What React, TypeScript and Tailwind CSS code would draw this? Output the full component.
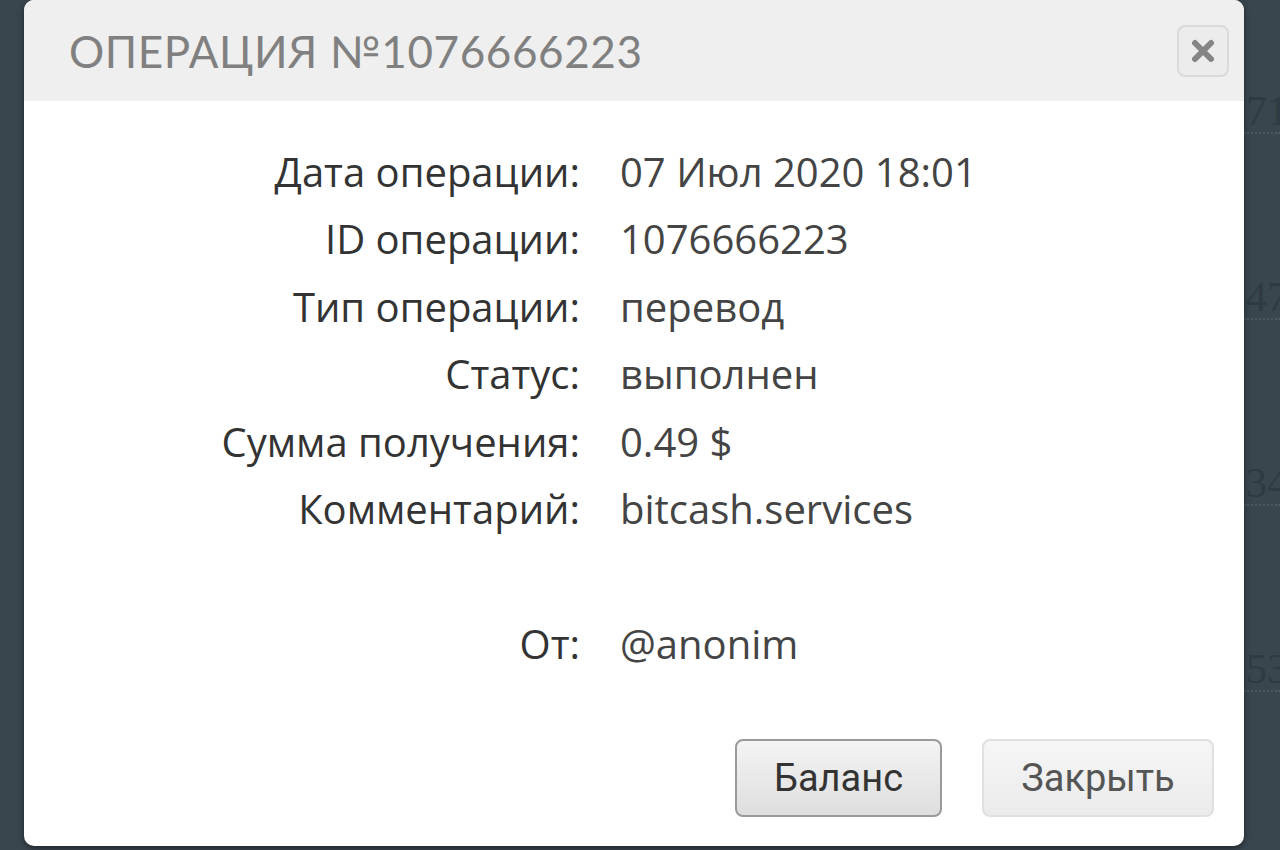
import React from 'react';

const rows = [
  { label: 'Дата операции:', value: '07 Июл 2020 18:01' },
  { label: 'ID операции:', value: '1076666223' },
  { label: 'Тип операции:', value: 'перевод' },
  { label: 'Статус:', value: 'выполнен' },
  { label: 'Сумма получения:', value: '0.49 $' },
  { label: 'Комментарий:', value: 'bitcash.services' },
];

const bgRows = ['71', '47', '34', '53'];

const App: React.FC = () => {
  return (
    <div className="relative h-[850px] w-[1280px] overflow-hidden bg-[#3a464e]">
      {/* table behind the modal */}
      <div className="flex flex-col pt-[88px]">
        {bgRows.map((n, i) => (
          <div key={i} className="grid h-[186px] grid-cols-[1244px_36px] overflow-hidden">
            <div />
            <div className="h-[46px] overflow-hidden whitespace-nowrap border-b-2 border-dotted border-[#4d5961] pl-[2px] font-['Liberation_Serif',serif] text-[42px] leading-[46px] text-[#2f3a41]">
              {n}
            </div>
          </div>
        ))}
      </div>

      {/* modal */}
      <div className="absolute left-[24px] top-0 flex h-[846px] w-[1220px] flex-col overflow-hidden rounded-[10px] bg-white shadow-[0_2px_6px_rgba(0,0,0,0.5)]">
        <div className="flex h-[101px] shrink-0 items-center justify-between bg-[#efefef] pl-[45px] pr-[15px]">
          <h1 className="font-['Lato',sans-serif] text-[44px] font-normal tracking-[0.6px] text-[#808080]">
            ОПЕРАЦИЯ №1076666223
          </h1>
          <button className="flex h-[52px] w-[52px] items-center justify-center rounded-[8px] border-2 border-[#dadada] bg-[#ececec]">
            <svg width="26" height="26" viewBox="0 0 26 26">
              <path d="M5 5 L21 21 M21 5 L5 21" stroke="#858585" strokeWidth="6" strokeLinecap="round" />
            </svg>
          </button>
        </div>

        <div className="flex flex-1 flex-col pt-[37px] font-['Open_Sans',sans-serif] text-[40px]">
          {rows.map((r) => (
            <div key={r.label} className="grid h-[67.5px] grid-cols-[556px_1fr] items-center gap-x-[40px]">
              <div className="text-right font-medium text-[#333]">{r.label}</div>
              <div className="text-[#444]">{r.value}</div>
            </div>
          ))}
          <div className="h-[67.5px]" />
          <div className="grid h-[67.5px] grid-cols-[556px_1fr] items-center gap-x-[40px]">
            <div className="text-right font-medium text-[#333]">От:</div>
            <div className="text-[#444]">@anonim</div>
          </div>

          <div className="mt-[61px] flex justify-end gap-[40px] pr-[30px] font-['Roboto',sans-serif] text-[38px]">
            <button className="h-[78px] w-[207px] rounded-[8px] border-2 border-[#9a9a9a] bg-gradient-to-b from-[#f4f4f4] to-[#dedede] text-[#333]">
              Баланс
            </button>
            <button className="h-[78px] w-[232px] rounded-[8px] border-2 border-[#e0e0e0] bg-gradient-to-b from-[#f6f6f6] to-[#ebebeb] text-[#555]">
              Закрыть
            </button>
          </div>
        </div>
      </div>
    </div>
  );
};

export default App;
